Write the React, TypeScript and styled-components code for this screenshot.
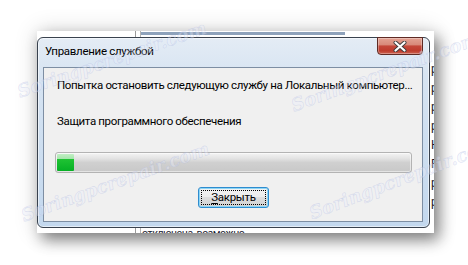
import React from 'react';
import styled, { createGlobalStyle } from 'styled-components';

const UI_FONT = `Roboto, 'Noto Sans', 'DejaVu Sans', sans-serif`;

const GlobalStyle = createGlobalStyle`
	html, body {
		margin: 0;
		padding: 0;
		background: #fff;
	}
	body {
		width: 468px;
		height: 265px;
		overflow: hidden;
	}
`;

const Stage = styled.div`
	position: relative;
	width: 468px;
	height: 265px;
	overflow: hidden;
	background: #fff;
	font-family: ${UI_FONT};
`;

// the cropped screenshot itself, with the drop shadow the site added
const Shot = styled.div`
	position: absolute;
	left: 37px;
	top: 31px;
	width: 397px;
	height: 202px;
	box-sizing: border-box;
	padding-top: 6px;
	background: #fff;
	overflow: hidden;
	box-shadow: 5px 7px 14px rgba(0, 0, 0, 0.45), 0 0 22px rgba(0, 0, 0, 0.16);
`;

// window behind the dialog, only slivers of it show
const BackWindow = styled.div`
	position: absolute;
	left: 98px;
	top: 0;
	right: 0;
	bottom: 0;
	border-left: 1px solid #9a9a9a;
	display: flex;
	flex-direction: column;
	padding-left: 4px;
	font-size: 12px;
	color: #1a1a2e;
`;

const BackInner = styled.div`
	flex: 1;
	display: flex;
	flex-direction: column;
	border-left: 1px solid #b4b4b4;
`;

const BackBar = styled.div`
	width: 204px;
	height: 3px;
	margin-top: 1px;
	background: #8ea2bb;
`;

const BackColumn = styled.div`
	margin-top: 25px;
	padding-left: 290px;
	display: flex;
	flex-direction: column;
`;

const BackCell = styled.div`
	height: 19px;
	line-height: 19px;
	white-space: nowrap;
`;

const BackFooter = styled.div`
	margin-top: auto;
	margin-bottom: -8px;
	padding-left: 1px;
	font-size: 10.5px;
	line-height: 15px;
	letter-spacing: -0.4px;
	white-space: nowrap;
`;

const Dialog = styled.div`
	position: relative;
	z-index: 1;
	width: 393px;
	height: 191px;
	box-sizing: border-box;
	border: 1px solid #39424e;
	border-radius: 6px;
	background: linear-gradient(180deg, #e4ecf5 0%, #d7e4f2 20%, #c3d8ee 100%);
	box-shadow: inset 0 0 0 1px rgba(255, 255, 255, 0.55);
	display: flex;
	flex-direction: column;
`;

const TitleBar = styled.div`
	height: 29px;
	display: flex;
	align-items: flex-start;
	justify-content: space-between;
	padding: 0 6px 0 7px;
`;

const Title = styled.span`
	margin-top: 6px;
	font-size: 11.5px;
	letter-spacing: -0.3px;
	line-height: 15px;
	color: #000;
`;

const CloseButton = styled.div`
	width: 46px;
	height: 18px;
	margin-top: -1px;
	box-sizing: border-box;
	border: 1px solid #5e2a24;
	border-radius: 0 0 4px 4px;
	background: linear-gradient(180deg, #e3a293 0%, #d88a7a 42%, #c4483a 50%, #be3c2d 80%, #cc6553 100%);
	box-shadow: inset 0 0 0 1px rgba(255, 255, 255, 0.3);
	display: flex;
	align-items: center;
	justify-content: center;
`;

const Client = styled.div`
	flex: 1;
	margin: 0 6px 5px 5px;
	border: 1px solid #7d8ea3;
	background: #f0f0f0;
	padding: 10px 10px 0 11px;
	display: flex;
	flex-direction: column;
`;

const Line = styled.div<{ $gap?: number }>`
	margin-top: ${p => p.$gap ?? 0}px;
	padding-left: 2px;
	font-size: 11.5px;
	letter-spacing: -0.35px;
	line-height: 15px;
	color: #000;
	white-space: nowrap;
`;

const Progress = styled.div`
	margin-top: 23px;
	height: 21px;
	box-sizing: border-box;
	border: 1px solid #b3b3b3;
	border-radius: 3px;
	padding: 1px;
	background: linear-gradient(180deg, #f4f4f4 0%, #e2e2e2 30%, #d0d0d0 50%, #c8c8c8 100%);
	box-shadow: inset 0 0 0 1px rgba(255, 255, 255, 0.5);
	display: flex;
`;

const ProgressFill = styled.div`
	height: 100%;
	border-radius: 1px;
	background: linear-gradient(180deg, #c2efc5 0%, #a4e4aa 30%, #1fc233 32%, #06b025 100%);
`;

const PushButton = styled.button`
	align-self: center;
	width: 71px;
	height: 21px;
	margin-top: 14px;
	padding: 0;
	box-sizing: border-box;
	border: 1px solid #2f8ccf;
	border-radius: 3px;
	background: linear-gradient(180deg, #f3f3f3 0%, #ececec 45%, #dedede 50%, #d1d1d1 100%);
	box-shadow: inset 0 0 0 1px #8dd6f6;
	outline: 1px dotted #000;
	outline-offset: -4px;
	font-family: ${UI_FONT};
	font-size: 11.5px;
	letter-spacing: -0.3px;
	line-height: 15px;
	color: #000;

	u {
		text-decoration: underline;
		text-underline-offset: 2px;
	}
`;

const Watermark = styled.span<{ $x: number; $y: number; $angle: number }>`
	position: absolute;
	left: ${p => p.$x}px;
	top: ${p => p.$y}px;
	z-index: 5;
	transform-origin: 0 50%;
	transform: rotate(${p => p.$angle}deg);
	font-family: 'DejaVu Serif', serif;
	font-style: italic;
	font-weight: bold;
	font-size: 18px;
	line-height: 24px;
	color: rgba(235, 238, 252, 0.35);
	-webkit-text-stroke: 0.6px rgba(150, 165, 215, 0.28);
	white-space: nowrap;
	pointer-events: none;
`;

const CloseIcon: React.FC = () => (
	<svg width='14' height='11' viewBox='0 0 14 11'>
		<path d='M2.5 1.5 L11.5 9.5 M11.5 1.5 L2.5 9.5' stroke='#3b3b3b' strokeWidth='4' strokeLinecap='round' />
		<path d='M2.5 1.5 L11.5 9.5 M11.5 1.5 L2.5 9.5' stroke='#fff' strokeWidth='2.2' strokeLinecap='round' />
	</svg>
);

const backCells = ['р', 'р', 'р', 'р', 'Н', 'Р', 'р', 'р'];

const marks = [
	{ x: 18, y: 80, angle: -19 },
	{ x: 292, y: 94, angle: -20 },
	{ x: 22, y: 204, angle: -20 },
	{ x: 310, y: 202, angle: -21 },
];

const App: React.FC = () => {
	return (
		<Stage>
			<GlobalStyle />
			<Shot>
				<BackWindow>
					<BackInner>
						<BackBar />
						<BackColumn>
							{backCells.map((c, i) => (
								<BackCell key={i}>{c}</BackCell>
							))}
						</BackColumn>
						<BackFooter>отключена, возможно</BackFooter>
					</BackInner>
				</BackWindow>
				<Dialog>
					<TitleBar>
						<Title>Управление службой</Title>
						<CloseButton>
							<CloseIcon />
						</CloseButton>
					</TitleBar>
					<Client>
						<Line>Попытка остановить следующую службу на Локальный компьютер...</Line>
						<Line $gap={21}>Защита программного обеспечения</Line>
						<Progress>
							<ProgressFill style={{ width: 17 }} />
						</Progress>
						<PushButton>
							<u>З</u>акрыть
						</PushButton>
					</Client>
				</Dialog>
			</Shot>
			{marks.map((m, i) => (
				<Watermark key={i} $x={m.x} $y={m.y} $angle={m.angle}>
					Soringpcrepair.com
				</Watermark>
			))}
		</Stage>
	);
};

export default App;
